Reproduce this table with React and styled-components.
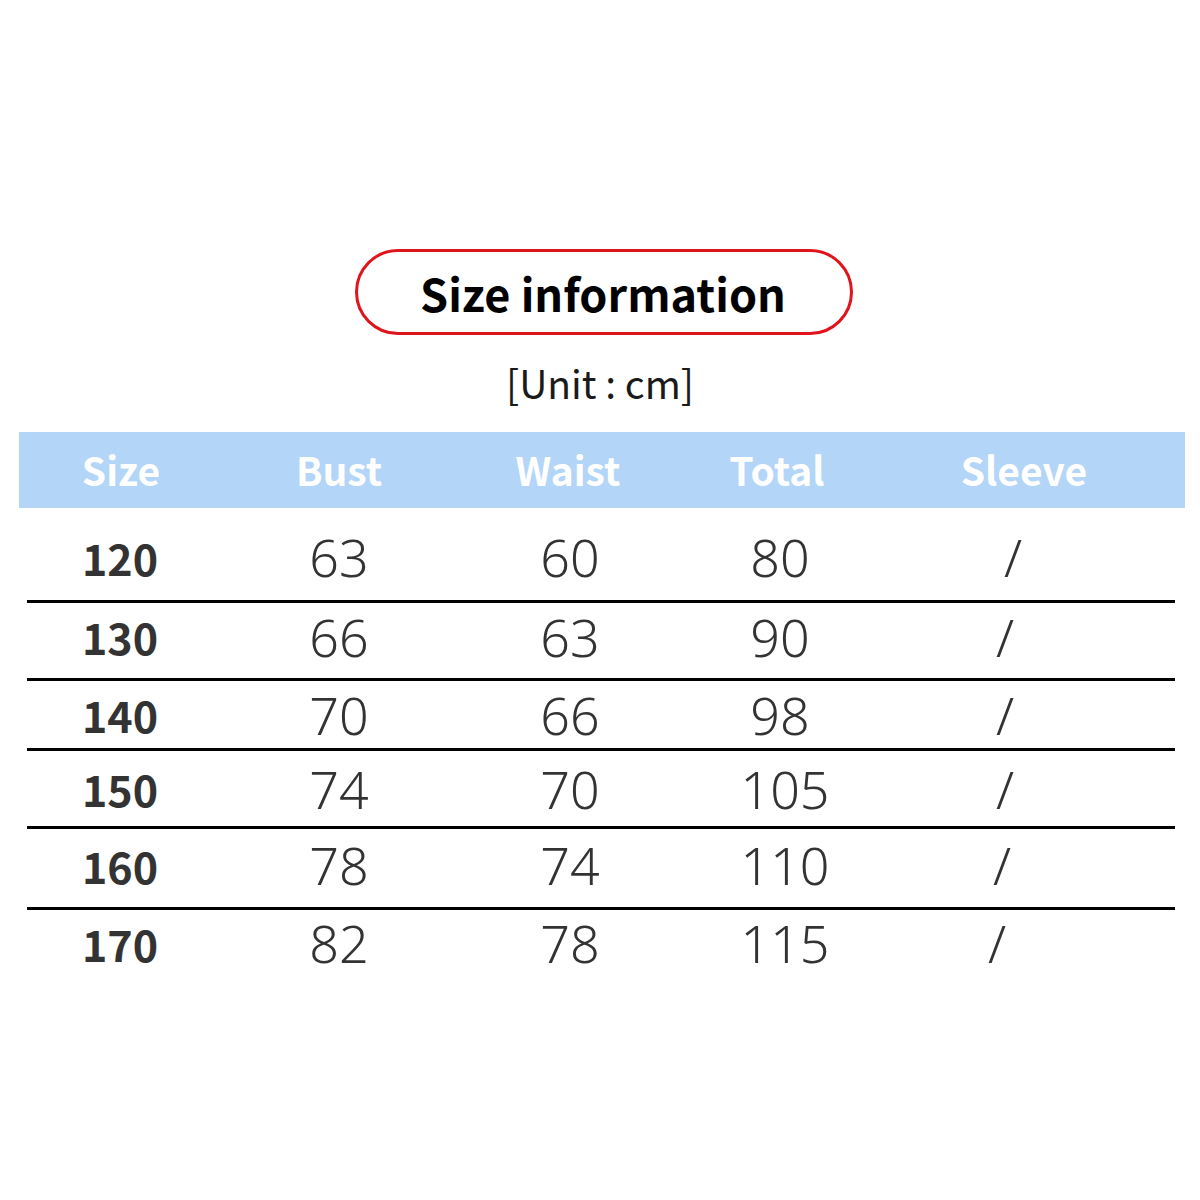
import React from "react";
import styled, { createGlobalStyle } from "styled-components";

const GlobalStyle = createGlobalStyle`
  html, body {
    margin: 0;
    padding: 0;
    background: #ffffff;
  }
  body {
    font-family: "Noto Sans CJK SC", "Noto Sans", sans-serif;
  }
`;

const Page = styled.div`
  width: 1200px;
  height: 1200px;
  display: flex;
  flex-direction: column;
  align-items: center;
  padding-top: 249px;
  box-sizing: border-box;
`;

const TitlePill = styled.div`
  width: 498px;
  height: 86px;
  margin-left: 8px;
  box-sizing: border-box;
  border: 3.5px solid #e0141c;
  border-radius: 43px;
  display: flex;
  align-items: center;
  justify-content: center;
  padding-right: 2px;
  font-family: "Noto Sans CJK SC", "Noto Sans", sans-serif;
  font-weight: 700;
  font-size: 45px;
  color: #000;
`;

const Unit = styled.div`
  margin-top: 20px;
  font-family: "Noto Sans CJK SC", "Noto Sans", sans-serif;
  font-weight: 400;
  font-size: 39px;
  line-height: 54px;
  color: #1a1a1a;
`;

const Table = styled.div`
  align-self: stretch;
  margin: 23px 15px 0 19px;
  display: flex;
  flex-direction: column;
`;

const HeaderBand = styled.div`
  height: 76px;
  background: #b3d5f7;
  display: grid;
  grid-template-columns: 204px 232px 226px 192px 302px;
  align-items: center;
`;

const HeadCell = styled.div`
  text-align: center;
  color: #ffffff;
  font-family: "Noto Sans CJK SC", "Noto Sans", sans-serif;
  font-weight: 700;
  font-size: 39px;
  line-height: 1;
  padding-bottom: 2px;
`;

const Body = styled.div`
  margin: 0 10px 0 8px;
  display: flex;
  flex-direction: column;
`;

const Row = styled.div`
  height: ${(p) => p.$h}px;
  box-sizing: border-box;
  display: grid;
  grid-template-columns: 186px 252px 210px 210px 1fr;
  align-items: center;
  padding-top: ${(p) => p.$pt || 0}px;
  padding-bottom: ${(p) => p.$pb || 0}px;
  border-bottom: ${(p) => (p.$last ? "none" : "3px solid #000")};
`;

const SizeCell = styled.div`
  text-align: center;
  font-family: "Noto Sans CJK SC", "Noto Sans", sans-serif;
  font-weight: 700;
  font-size: 43px;
  color: #333;
  line-height: 1;
`;

const ValueCell = styled.div`
  text-align: center;
  font-family: "Noto Sans", "Noto Sans CJK SC", sans-serif;
  font-weight: 300;
  font-size: 52px;
  color: #333;
  line-height: 1;
  transform: translateX(${(p) => p.$dx || 0}px);
`;

const headers = ["Size", "Bust", "Waist", "Total", "Sleeve"];

const rows = [
  { size: "120", bust: "63", waist: "60", total: "80", h: 95, pt: 6, pb: 0, sx: -17 },
  { size: "130", bust: "66", waist: "63", total: "90", h: 78, pt: 0, pb: 8, sx: -25 },
  { size: "140", bust: "70", waist: "66", total: "98", h: 70, pt: 0, pb: 0, sx: -25 },
  { size: "150", bust: "74", waist: "70", total: "105", h: 78, pt: 0, pb: 0, sx: -25 },
  { size: "160", bust: "78", waist: "74", total: "110", h: 81, pt: 0, pb: 6, sx: -28 },
  { size: "170", bust: "82", waist: "78", total: "115", h: 76, pt: 0, pb: 10, sx: -33 },
];

export default function App() {
  return (
    <>
      <GlobalStyle />
      <Page>
        <TitlePill>Size information</TitlePill>
        <Unit>[Unit : cm]</Unit>
        <Table>
          <HeaderBand>
            {headers.map((h) => (
              <HeadCell key={h}>{h}</HeadCell>
            ))}
          </HeaderBand>
          <Body>
            {rows.map((r, i) => (
              <Row
                key={r.size}
                $h={r.h}
                $pt={r.pt}
                $pb={r.pb}
                $last={i === rows.length - 1}
              >
                <SizeCell>{r.size}</SizeCell>
                <ValueCell>{r.bust}</ValueCell>
                <ValueCell>{r.waist}</ValueCell>
                <ValueCell $dx={r.total.length > 2 ? 5 : 0}>{r.total}</ValueCell>
                <ValueCell $dx={r.sx}>/</ValueCell>
              </Row>
            ))}
          </Body>
        </Table>
      </Page>
    </>
  );
}
